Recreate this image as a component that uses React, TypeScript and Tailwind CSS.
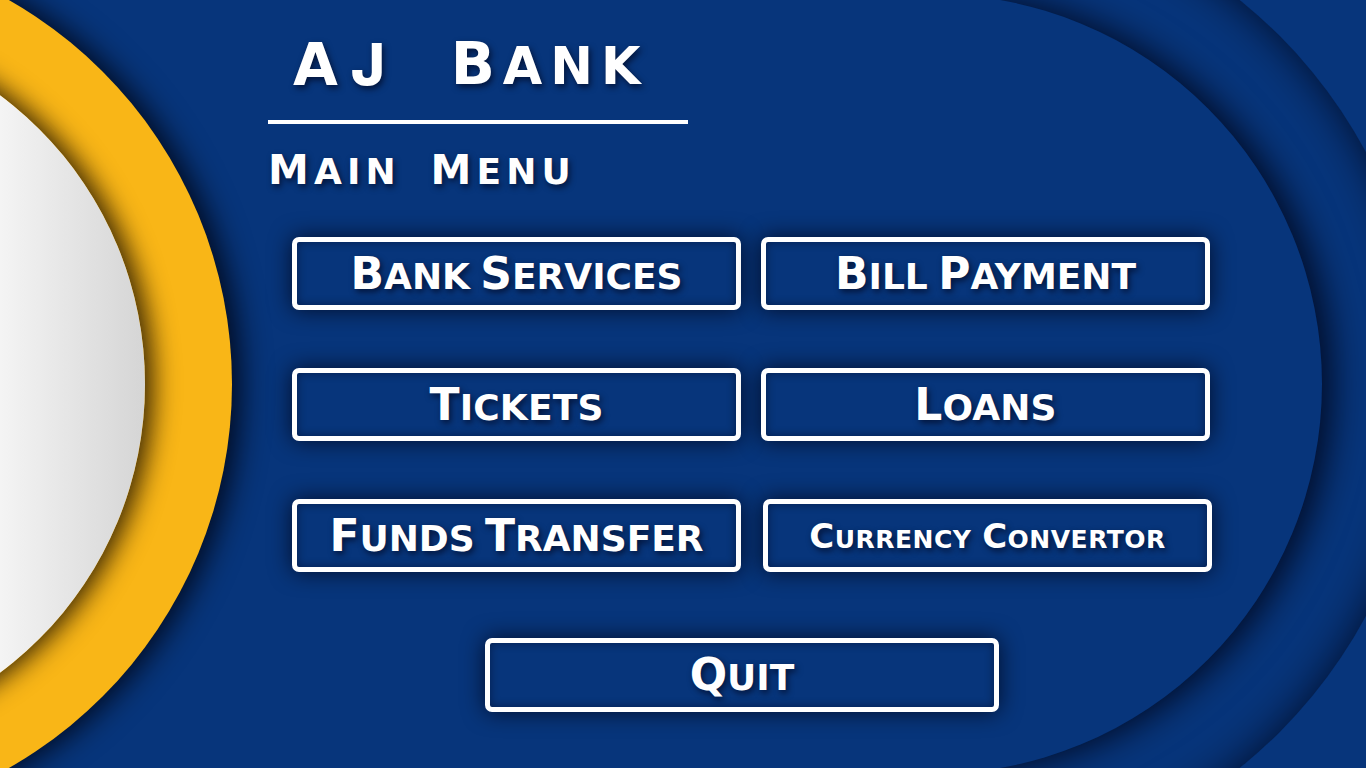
import React from 'react';

const font = "font-['DejaVu_Sans','Inter',sans-serif]";
const shadowText = '[text-shadow:2px_3px_6px_rgba(0,0,20,0.65)]';

function Caps({ text, big, small }: { text: string; big: string; small: string }) {
  const words = text.split(' ');
  return (
    <span className="whitespace-pre">
      {words.map((w, i) => (
        <React.Fragment key={i}>
          {i > 0 && ' '}
          <span className={big}>{w[0]}</span>
          <span className={small}>{w.slice(1).toUpperCase()}</span>
        </React.Fragment>
      ))}
    </span>
  );
}

function MenuButton({
  label,
  big = 'text-[44px]',
  small = 'text-[36px]',
  track = 'tracking-[0em]',
  className = '',
}: {
  label: string;
  big?: string;
  small?: string;
  track?: string;
  className?: string;
}) {
  return (
    <button
      className={`flex h-[73px] items-center justify-center rounded-[7px] border-[5px] border-white bg-[#07357b] shadow-[0_0_22px_rgba(0,0,15,0.75),inset_0_0_10px_rgba(0,0,20,0.45)] text-white font-bold leading-none [word-spacing:0.3em] ${track} ${shadowText} ${className}`}
    >
      <Caps text={label} big={big} small={small} />
    </button>
  );
}

export default function App() {
  return (
    <div className={`relative h-[768px] w-full overflow-hidden bg-[#07357b] ${font}`}>
      {/* background cut-paper shapes */}
      <div className="absolute left-[440px] top-[-108px] h-[984px] w-[984px] rounded-full bg-[#07357b] shadow-[inset_0_0_45px_rgba(0,0,15,0.75)]" />
      <div className="absolute left-[542px] top-[-6px] h-[780px] w-[780px] rounded-full bg-[#07357b] shadow-[10px_0_35px_rgba(0,0,15,0.8)]" />
      <div className="absolute left-0 top-0 h-[768px] w-[932px] bg-[#07357b]" />
      <div className="absolute left-[-652px] top-[-58px] h-[884px] w-[884px] rounded-full bg-[#f9b617] shadow-[8px_0_30px_rgba(0,0,10,0.85)]" />
      <div className="absolute left-[-575px] top-[24px] h-[720px] w-[720px] rounded-full bg-[linear-gradient(to_right,#f4f4f4_80%,#d5d5d5_100%)] shadow-[8px_0_26px_rgba(20,10,0,0.85)]" />

      <div className="relative flex flex-col pl-[268px] pt-[35px] text-white">
        <div className={`flex w-[420px] gap-[53px] pl-[25px] font-bold leading-none ${shadowText}`}>
          <span className="text-[58px] tracking-[0.22em]">
            A<span className="font-['Inter',sans-serif] font-extrabold">J</span>
          </span>
          <span className="tracking-[0.5em]">
            <Caps text="Bank" big="text-[58px]" small="text-[51px]" />
          </span>
        </div>
        <div className="mt-[26px] h-[4px] w-[420px] bg-white" />
        <div className={`mt-[26px] font-bold leading-none tracking-[0.32em] [word-spacing:1.2em] ${shadowText}`}>
          <Caps text="Main Menu" big="text-[41px]" small="text-[36px]" />
        </div>

        <div className="ml-[24px] mt-[46px] grid grid-cols-[449px_449px] gap-x-[20px] gap-y-[58px]">
          <MenuButton label="Bank Services" />
          <MenuButton label="Bill Payment" />
          <MenuButton label="Tickets" track="tracking-[0.01em]" />
          <MenuButton label="Loans" track="tracking-[0.01em]" />
          <MenuButton label="Funds Transfer" />
          <MenuButton
            label="Currency Convertor"
            big="text-[34px]"
            small="text-[25px]"
            track="tracking-[0.03em]"
            className="translate-x-[2px]"
          />
        </div>

        <MenuButton label="Quit" className="ml-[217px] mt-[66px] h-[74px] w-[514px]" />
      </div>
    </div>
  );
}
